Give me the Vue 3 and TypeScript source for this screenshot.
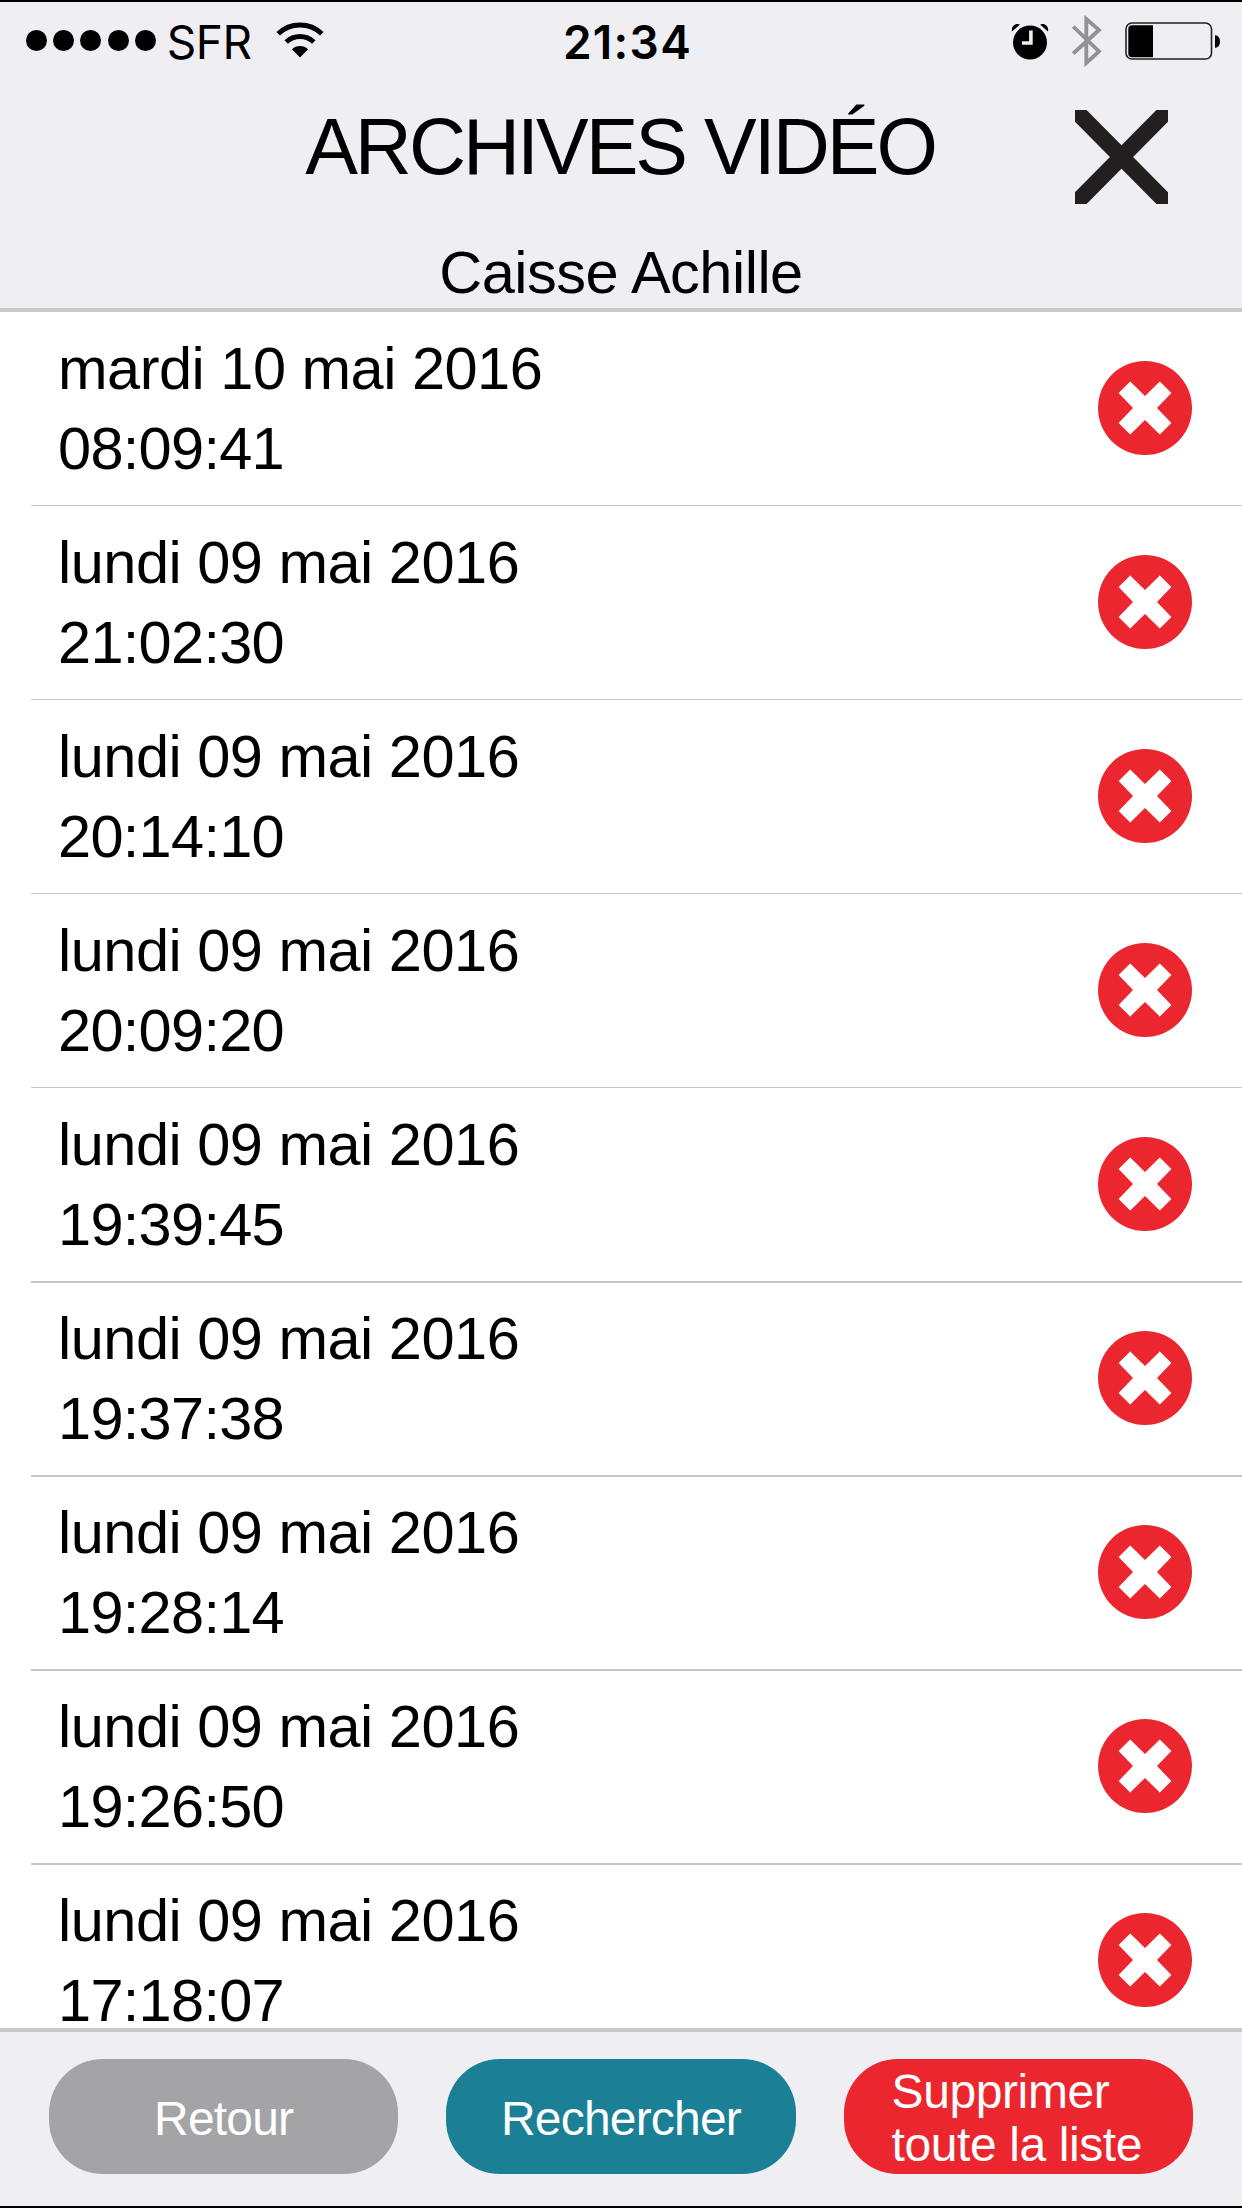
<script setup lang="ts">
interface Archive {
  date: string
  time: string
}

const archives: Archive[] = [
  { date: 'mardi 10 mai 2016', time: '08:09:41' },
  { date: 'lundi 09 mai 2016', time: '21:02:30' },
  { date: 'lundi 09 mai 2016', time: '20:14:10' },
  { date: 'lundi 09 mai 2016', time: '20:09:20' },
  { date: 'lundi 09 mai 2016', time: '19:39:45' },
  { date: 'lundi 09 mai 2016', time: '19:37:38' },
  { date: 'lundi 09 mai 2016', time: '19:28:14' },
  { date: 'lundi 09 mai 2016', time: '19:26:50' },
  { date: 'lundi 09 mai 2016', time: '17:18:07' },
]
</script>

<template>
  <div class="screen">
    <header class="header">
      <div class="status">
        <div class="status-left">
          <span class="dots"><i v-for="n in 5" :key="n" class="dot"></i></span>
          <span class="carrier">SFR</span>
          <svg class="wifi" width="48" height="36" viewBox="0 0 48 36">
            <path d="M2.2 11.8 A31.5 31.5 0 0 1 45.8 11.8" fill="none" stroke="#000" stroke-width="5" />
            <path d="M10.2 20 A20 20 0 0 1 37.8 20" fill="none" stroke="#000" stroke-width="5" />
            <path d="M16 27.2 A11.3 11.3 0 0 1 32 27.2 L24 35.4 Z" fill="#000" />
          </svg>
        </div>
        <span class="clock">21:34</span>
        <div class="status-right">
          <svg class="alarm" width="38" height="38" viewBox="0 0 38 38">
            <circle cx="19" cy="20.5" r="17" fill="#000" />
            <path d="M1 9.5 C0 4 4.5 .5 9 2.5 Z M37 9.5 C38 4 33.5 .5 29 2.5 Z" fill="#000" />
            <path d="M19.9 8.5 V21 H11" fill="none" stroke="#efeef3" stroke-width="3.6" />
          </svg>
          <svg class="bluetooth" width="32" height="54" viewBox="0 0 32 54">
            <path d="M2.2 12.5 L28 37.5 L15.3 49 V5 L28 16 L2.2 39.5" fill="none" stroke="#929195" stroke-width="3.8" stroke-miterlimit="8" />
          </svg>
          <svg class="battery" width="96" height="38" viewBox="0 0 96 38">
            <rect x="1" y="1" width="85.5" height="36" rx="6" fill="none" stroke="#222" stroke-width="1.6" />
            <path d="M7 3.2 H28 V35.2 H7 Q3.3 35.2 3.3 31.5 V6.9 Q3.3 3.2 7 3.2 Z" fill="#000" />
            <path d="M90 13 Q95 14 95 19.5 Q95 25 90 26 Z" fill="#000" />
          </svg>
        </div>
      </div>
      <div class="title-row">
        <h1>ARCHIVES VIDÉO</h1>
        <svg class="close" width="93" height="94" viewBox="0 0 93 94">
          <path d="M-5 -5 L98 99 M98 -5 L-5 99" fill="none" stroke="#231f20" stroke-width="16.5" />
        </svg>
      </div>
      <h2>Caisse Achille</h2>
    </header>

    <main class="body">
      <ul class="list">
        <li v-for="(a, i) in archives" :key="i" class="row" :class="{ first: i === 0, strong: i > 4 }">
          <div class="label">
            <span>{{ a.date }}</span>
            <span class="time">{{ a.time }}</span>
          </div>
          <svg class="delete" width="94" height="94" viewBox="-47 -47 94 94">
            <circle r="47" fill="#eb262f" />
            <path
              d="M0 -12 L14.8 -26.6 L26.4 -15 L12 0 L26.4 15 L14.8 26.6 L0 12 L-14.8 26.6 L-26.4 15 L-12 0 L-26.4 -15 L-14.8 -26.6 Z"
              fill="#fff"
            />
          </svg>
        </li>
      </ul>
    </main>

    <footer class="footer">
      <button class="btn grey">Retour</button>
      <button class="btn teal">Rechercher</button>
      <button class="btn red"><span>Supprimer<br />toute la liste</span></button>
    </footer>
  </div>
</template>

<style>
body {
  margin: 0;
}
</style>

<style scoped>
.screen {
  box-sizing: border-box;
  width: 1242px;
  height: 2208px;
  display: flex;
  flex-direction: column;
  border-top: 2px solid #000;
  border-bottom: 2px solid #000;
  overflow: hidden;
  background: #fff;
  color: #000;
  font-family: "Liberation Sans", Arial, sans-serif;
}
.header {
  box-sizing: border-box;
  height: 310px;
  flex: none;
  background: #efeef3;
  border-bottom: 4px solid #c9c9cb;
}
.status {
  display: grid;
  grid-template-columns: 1fr auto 1fr;
  height: 78px;
  font-family: Inter, sans-serif;
  font-size: 46px;
  line-height: 80px;
}
.status-left {
  display: flex;
  padding-left: 26px;
}
.dots {
  display: flex;
  gap: 6.2px;
  padding-top: 28px;
}
.dot {
  width: 21px;
  height: 21px;
  border-radius: 50%;
  background: #000;
}
.carrier {
  margin-left: 11px;
  width: 84px;
  letter-spacing: -0.4px;
  white-space: nowrap;
}
.wifi {
  margin: 20px 0 0 25px;
}
.clock {
  padding-left: 13px;
  font-weight: 600;
  letter-spacing: 1.3px;
  white-space: nowrap;
}
.status-right {
  display: flex;
  justify-content: flex-end;
  padding-right: 21px;
}
.alarm {
  margin: 20px 22px 0 0;
}
.bluetooth {
  margin: 12px 22px 0 0;
}
.battery {
  margin-top: 20px;
}
.title-row {
  display: grid;
  grid-template-columns: 1fr auto 1fr;
  height: 150px;
}
h1 {
  grid-column: 2;
  margin: 0;
  padding: 20px 2px 0 0;
  font-size: 79px;
  font-weight: 400;
  line-height: 94px;
  letter-spacing: -3px;
  white-space: nowrap;
}
.close {
  justify-self: end;
  margin: 30px 74px 0 0;
  overflow: hidden;
}
h2 {
  margin: 0;
  font-size: 59.5px;
  font-weight: 400;
  line-height: 86px;
  letter-spacing: -0.5px;
  text-align: center;
}
.body {
  flex: 1;
  min-height: 0;
}
.list {
  margin: 0;
  padding: 0;
  list-style: none;
  display: flex;
  flex-direction: column;
}
.row {
  box-sizing: border-box;
  height: 194px;
  margin-left: 31px;
  padding: 27px 50px 0 27px;
  display: flex;
  justify-content: space-between;
  box-shadow: inset 0 1px #c6c6ca;
}
.row.strong {
  box-shadow: inset 0 2px #c6c6ca;
}
.row.first {
  margin-top: -1px;
  box-shadow: none;
}
.label {
  display: flex;
  flex-direction: column;
  gap: 19px;
  font-size: 59.5px;
  line-height: 61px;
  letter-spacing: -0.5px;
  white-space: nowrap;
}
.time {
  letter-spacing: -0.7px;
}
.delete {
  flex: none;
  margin-top: 23px;
}
.footer {
  box-sizing: border-box;
  height: 178px;
  flex: none;
  display: flex;
  gap: 48px;
  padding: 27px 49px 0;
  background: #efeef3;
  border-top: 4px solid #c9c9cb;
}
.btn {
  flex: 1;
  height: 115px;
  padding: 3px 0 0;
  display: flex;
  align-items: center;
  justify-content: center;
  border: 0;
  border-radius: 54px;
  color: #fff;
  font-family: inherit;
  font-size: 48px;
  line-height: 53px;
  letter-spacing: -0.8px;
  text-align: left;
  white-space: nowrap;
}
.grey {
  background: #a4a4a6;
}
.teal {
  background: #1b7f95;
}
.red {
  background: #eb262f;
  letter-spacing: -0.4px;
}
.red span {
  margin-right: 3px;
}
</style>
